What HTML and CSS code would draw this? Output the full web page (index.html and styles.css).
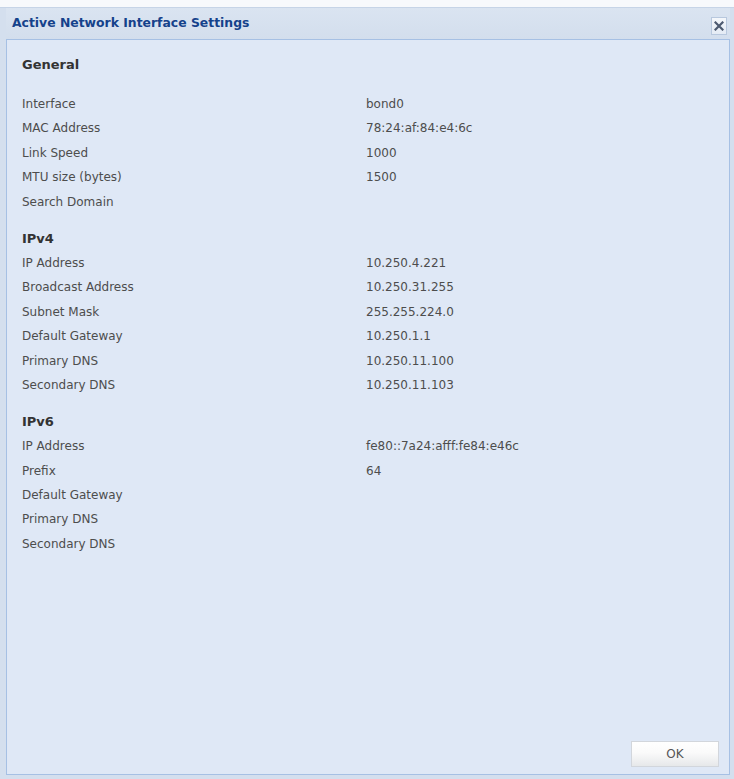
FILE: index.html
```html
<!DOCTYPE html>
<html>
<head>
<meta charset="utf-8">
<link rel="stylesheet" href="styles.css">
</head>
<body>
<div class="window">
  <div class="header">
    <span class="title">Active Network Interface Settings</span>
    <span class="close"><svg width="10" height="10" viewBox="0 0 10 10"><path d="M1.5 1.5 L8.5 8.5 M8.5 1.5 L1.5 8.5" stroke="#4d5a70" stroke-width="2.2" stroke-linecap="square"/></svg></span>
  </div>
  <div class="panel">
    <div class="section">
      <div class="section-title first">General</div>
      <div class="row"><span>Interface</span><span>bond0</span></div>
      <div class="row"><span>MAC Address</span><span>78:24:af:84:e4:6c</span></div>
      <div class="row"><span>Link Speed</span><span>1000</span></div>
      <div class="row"><span>MTU size (bytes)</span><span>1500</span></div>
      <div class="row"><span>Search Domain</span><span></span></div>
    </div>
    <div class="section">
      <div class="section-title">IPv4</div>
      <div class="row"><span>IP Address</span><span>10.250.4.221</span></div>
      <div class="row"><span>Broadcast Address</span><span>10.250.31.255</span></div>
      <div class="row"><span>Subnet Mask</span><span>255.255.224.0</span></div>
      <div class="row"><span>Default Gateway</span><span>10.250.1.1</span></div>
      <div class="row"><span>Primary DNS</span><span>10.250.11.100</span></div>
      <div class="row"><span>Secondary DNS</span><span>10.250.11.103</span></div>
    </div>
    <div class="section">
      <div class="section-title">IPv6</div>
      <div class="row"><span>IP Address</span><span>fe80::7a24:afff:fe84:e46c</span></div>
      <div class="row"><span>Prefix</span><span>64</span></div>
      <div class="row"><span>Default Gateway</span><span></span></div>
      <div class="row"><span>Primary DNS</span><span></span></div>
      <div class="row"><span>Secondary DNS</span><span></span></div>
    </div>
    <div class="footer">
      <button class="ok">OK</button>
    </div>
  </div>
</div>
</body>
</html>
```

FILE: styles.css
```css
html, body {
  margin: 0;
  height: 100%;
  background: #f7f9fc;
  font-family: "DejaVu Sans", "Liberation Sans", sans-serif;
}

.window {
  margin-top: 7px;
  height: 772px;
  box-sizing: border-box;
  background: #d4dfee;
  border-top: 1px solid #c6d4e7;
  display: flex;
  flex-direction: column;
  padding: 0 4px 4px 6px;
}

.header {
  height: 31px;
  flex: none;
  display: flex;
  align-items: center;
  justify-content: space-between;
  padding: 0 3px 0 6px;
  background: linear-gradient(#dae4f1, #d3deed);
}

.title {
  font-weight: bold;
  font-size: 12.4px;
  color: #15428b;
  margin-top: -2px;
}

.close {
  width: 14px;
  height: 16px;
  box-sizing: border-box;
  border: 1px solid #b8c8de;
  background: linear-gradient(#f4f7fb, #e4ebf5);
  display: flex;
  align-items: center;
  justify-content: center;
  margin-top: 5px;
  width: 16px;
  height: 18px;
}

.panel {
  flex: 1;
  background: #dfe8f6;
  border: 1px solid #a6c0e4;
  display: flex;
  flex-direction: column;
  padding: 15px 0 0 15px;
}

.section {
  margin-top: 15px;
}

.section:first-child {
  margin-top: 0;
}

.section-title {
  font-weight: bold;
  font-size: 13px;
  line-height: 20px;
  color: #333;
  margin-bottom: 2px;
}

.section-title.first {
  margin-bottom: 17px;
}

.row {
  display: grid;
  grid-template-columns: 344px 1fr;
  font-size: 12px;
  line-height: 24.4px;
  height: 24.4px;
  color: #4d4d4d;
}

.footer {
  margin-top: auto;
  display: flex;
  justify-content: flex-end;
  padding: 0 10px 7px 0;
}

.ok {
  width: 88px;
  height: 26px;
  border: 1px solid #d2d6dc;
  background: linear-gradient(#ffffff, #fafafa 45%, #e6e8ea);
  font-family: "DejaVu Sans", sans-serif;
  font-size: 12px;
  color: #555;
  padding: 0;
}
```
